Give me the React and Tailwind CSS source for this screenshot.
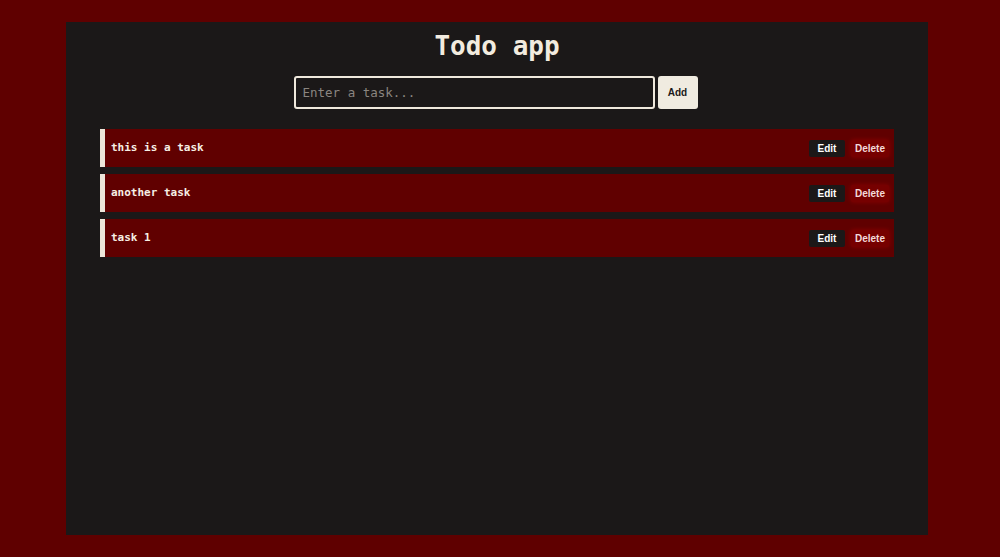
const tasks = ['this is a task', 'another task', 'task 1'];

export default function App() {
  return (
    <div className="w-[1000px] h-[557px] bg-[#5f0000] pt-[22px] pl-[66px]">
      <div className="w-[862px] h-[513px] bg-[#1b1818] pt-[12px] px-[34px]">
        {/* Header */}
        <h1 className="text-center text-[26px] leading-[32px] font-bold text-[#f2ebdf] font-['DejaVu_Sans_Mono',monospace] -mt-[4px]">
          Todo app
        </h1>

        {/* Input */}
        <div className="flex justify-center items-center gap-[3px] mt-[14px] pr-[3px]">
          <input
            placeholder="Enter a task..."
            className="w-[361px] h-[33px] rounded-[3px] border-2 border-[#efe8dc] bg-[#1b1818] px-[7px] text-[12.5px] text-[#f2ebdf] placeholder:text-[#8a8580] font-['DejaVu_Sans_Mono',monospace] outline-none"
          />
          <button className="w-[40px] h-[33px] rounded-[3px] bg-[#f0ebe0] text-[10px] font-bold text-[#1b1818] font-['Liberation_Sans',Arial,sans-serif]">
            Add
          </button>
        </div>

        {/* Tasks */}
        <div className="flex flex-col gap-[7px] mt-[20px]">
          {tasks.map((t) => (
            <div
              key={t}
              className="h-[38px] flex items-center justify-between bg-[#600000] border-l-[5px] border-[#ece6da] pl-[6px] pr-[5px]"
            >
              <span className="text-[11px] font-bold text-[#f6efe4] font-['DejaVu_Sans_Mono',monospace]">
                {t}
              </span>
              <div className="flex items-center gap-[6px]">
                <button className="w-[36px] h-[17px] rounded-[2px] bg-[#1b1818] text-[10px] font-bold text-white font-['Liberation_Sans',Arial,sans-serif]">
                  Edit
                </button>
                <button className="w-[38px] h-[17px] rounded-[2px] bg-[#760000] shadow-[0_0_4px_#8c0000] text-[10px] font-bold text-[#f3dada] font-['Liberation_Sans',Arial,sans-serif]">
                  Delete
                </button>
              </div>
            </div>
          ))}
        </div>
      </div>
    </div>
  );
}
